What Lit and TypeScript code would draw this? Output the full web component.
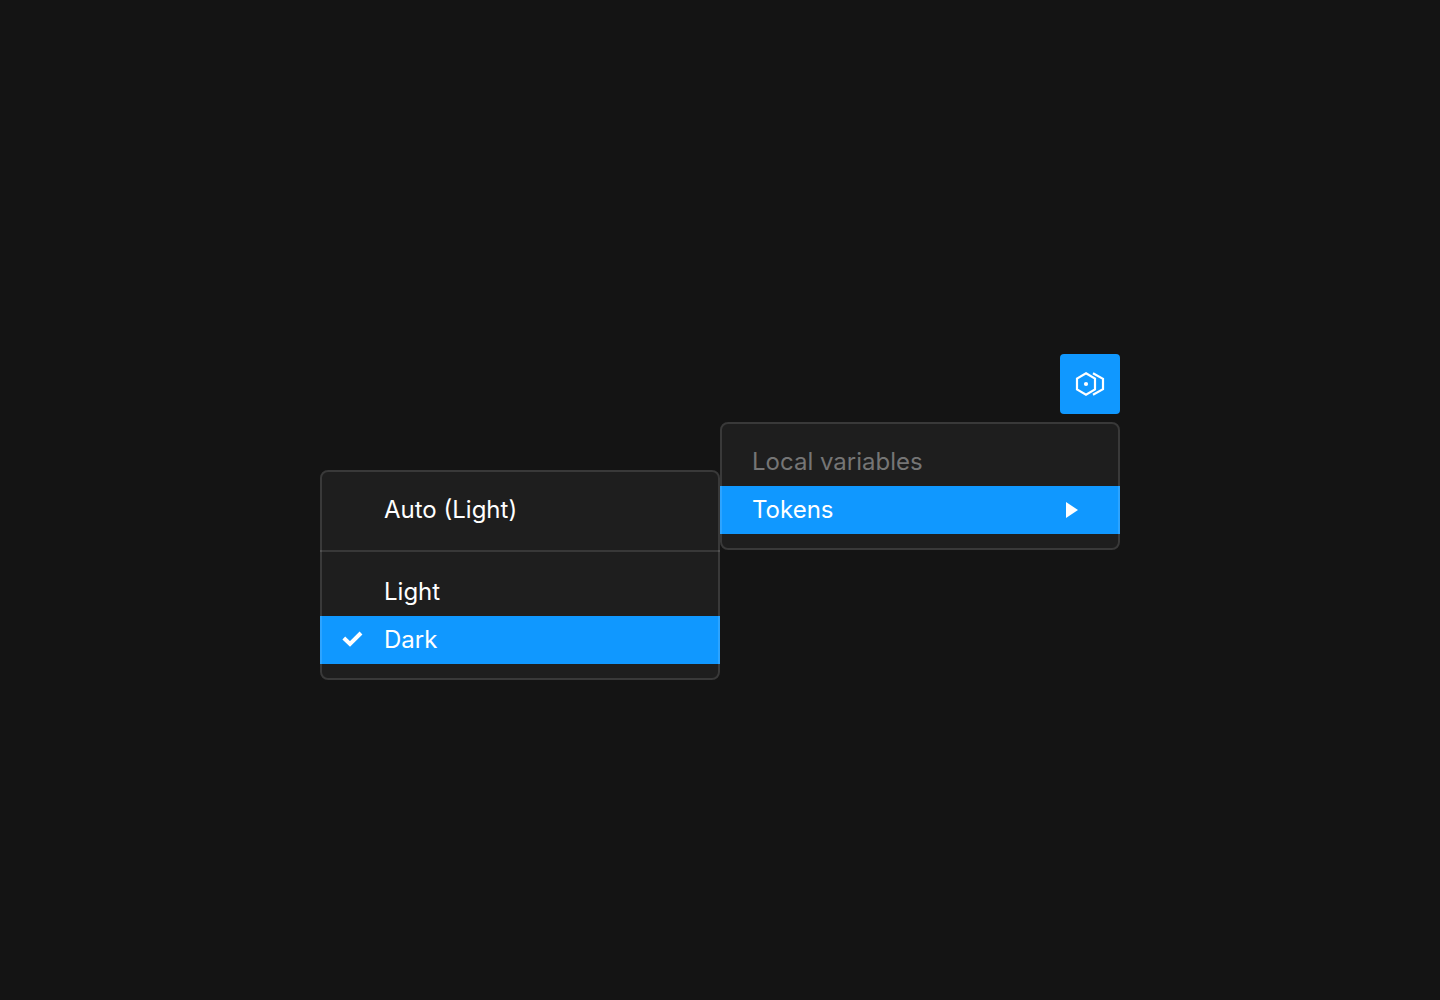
import { LitElement, html, css, svg, nothing } from "lit";
import { customElement, property } from "lit/decorators.js";

const variablesIcon = svg`
  <path d="M26 19.2 35 24.6V35.4L26 40.8 17 35.4V24.6Z" />
  <path d="M33 19.2 43 24.8V35.2L33 40.8" />
  <circle cx="26" cy="30" r="2.1" />
`;

@customElement("menu-item")
export class MenuItem extends LitElement {
  @property() label = "";
  @property({ type: Boolean }) active = false;
  @property({ type: Boolean }) muted = false;
  @property({ type: Boolean }) inset = false;
  @property({ type: Boolean }) checked = false;
  @property({ type: Boolean }) submenu = false;

  static styles = css`
    :host {
      display: block;
    }
    .item {
      box-sizing: border-box;
      display: flex;
      align-items: center;
      width: 100%;
      height: 48px;
      margin: 0;
      padding: 0 40px 0 32px;
      border: 0;
      background: transparent;
      color: #ffffff;
      font: 400 24px/32px Inter, sans-serif;
      text-align: left;
    }
    .item.inset {
      padding-left: 20px;
    }
    .item.active {
      background: #1098ff;
    }
    .item.muted {
      color: #757575;
    }
    .label {
      flex: 1;
    }
    .mark {
      display: flex;
      flex: none;
      width: 44px;
    }
    svg {
      display: block;
    }
    .check {
      fill: none;
      stroke: #ffffff;
      stroke-width: 4;
    }
    .arrow {
      fill: #ffffff;
    }
  `;

  render() {
    const names = [
      "item",
      this.active ? "active" : "",
      this.muted ? "muted" : "",
      this.inset ? "inset" : "",
    ].filter(Boolean).join(" ");
    return html`
      <button class=${names} type="button">
        ${this.inset
          ? html`<span class="mark">
              ${this.checked
                ? html`<svg class="check" width="24" height="24" viewBox="0 0 24 24" aria-hidden="true">
                    <path d="M3.8 10 10 16 21 5" />
                  </svg>`
                : nothing}
            </span>`
          : nothing}
        <span class="label">${this.label}</span>
        ${this.submenu
          ? html`<svg class="arrow" width="16" height="16" viewBox="0 0 16 16" aria-hidden="true">
              <path d="M2 0 14 8 2 16Z" />
            </svg>`
          : nothing}
      </button>
    `;
  }
}

@customElement("app-root")
export class AppRoot extends LitElement {
  static styles = css`
    :host {
      box-sizing: border-box;
      display: flex;
      flex-direction: column;
      align-items: center;
      justify-content: center;
      min-height: 100vh;
      padding: 34px 16px 0;
      background: #141414;
      font-family: Inter, sans-serif;
    }
    .picker {
      display: flex;
      flex-direction: column;
      gap: 8px;
      width: 100%;
      max-width: 800px;
    }
    .trigger {
      align-self: flex-end;
      width: 60px;
      height: 60px;
      padding: 0;
      border: 0;
      border-radius: 4px;
      background: #1098ff;
    }
    .trigger svg {
      display: block;
      fill: none;
      stroke: #ffffff;
      stroke-width: 2.2;
    }
    .trigger circle {
      fill: #ffffff;
      stroke: none;
    }
    .menus {
      display: grid;
      grid-template-columns: 1fr 1fr;
      align-items: start;
    }
    .menu {
      position: relative;
      padding: 16px 0;
      border-radius: 8px;
      background: #1e1e1e;
    }
    /* Translucent outline that also tints the ends of highlighted rows */
    .menu::after {
      content: "";
      position: absolute;
      inset: 0;
      border: 2px solid rgba(255, 255, 255, 0.12);
      border-radius: 8px;
      pointer-events: none;
    }
    .modes {
      margin-top: 48px;
    }
    .divider {
      height: 2px;
      margin: 16px 0;
      border: 0;
      background: #383838;
    }
  `;

  render() {
    return html`
      <main class="picker">
        <button class="trigger" type="button" aria-label="Variable modes">
          <svg width="60" height="60" viewBox="0 0 60 60" aria-hidden="true">${variablesIcon}</svg>
        </button>
        <div class="menus">
          <nav class="menu modes" aria-label="Modes">
            <menu-item label="Auto (Light)" inset></menu-item>
            <hr class="divider" />
            <menu-item label="Light" inset></menu-item>
            <menu-item label="Dark" inset checked active></menu-item>
          </nav>
          <nav class="menu" aria-label="Collections">
            <menu-item label="Local variables" muted></menu-item>
            <menu-item label="Tokens" active submenu></menu-item>
          </nav>
        </div>
      </main>
    `;
  }
}
